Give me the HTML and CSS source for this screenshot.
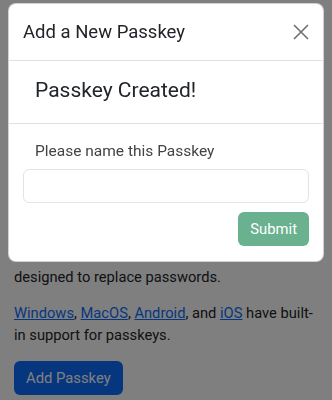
FILE: index.html
```html
<!DOCTYPE html>
<html lang="en">
<head>
    <meta charset="UTF-8">
    <meta name="viewport" content="width=device-width, initial-scale=1.0">
    <title>Passkeys</title>
    <link rel="stylesheet" href="styles.css">
</head>
<body>

    <!-- Page behind the modal -->
    <div class="page">
        <h1>Passkeys</h1>
        <p>This page lets you try out passkeys,<br>a new way to sign in to websites<br>and apps without a password.</p>
        <p>Nothing is sent anywhere; the keys<br>stay on this device.</p>
        <p>Passkeys are a new standard<br>which is an alternative method<br>designed to replace passwords.</p>
        <p><a href="#">Windows</a>, <a href="#">MacOS</a>, <a href="#">Android</a>, and <a href="#">iOS</a> have built-in support for passkeys.</p>
        <button class="btn-primary">Add Passkey</button>
    </div>

    <!-- Modal -->
    <div class="backdrop"></div>
    <div class="modal">
        <div class="modal-header">
            <h5 class="modal-title">Add a New Passkey</h5>
            <button class="btn-close" aria-label="Close">
                <svg width="16" height="16" viewBox="0 0 16 16">
                    <path d="M1 1 L15 15 M15 1 L1 15" stroke="#6f6f6f" stroke-width="1.6" fill="none"/>
                </svg>
            </button>
        </div>
        <div class="modal-status">
            <h4>Passkey Created!</h4>
        </div>
        <div class="modal-body">
            <label for="keyName">Please name this Passkey</label>
            <input id="keyName" type="text" class="input-field">
            <div class="actions">
                <button class="btn-success" disabled>Submit</button>
            </div>
        </div>
    </div>

</body>
</html>
```

FILE: styles.css
```css
body {
    font-family: Roboto, "Noto Sans", Arial, sans-serif;
    font-size: 14.7px;
    line-height: 22px;
    color: #212529;
    margin: 0;
    padding: 0;
    background-color: #fff;
    height: 100vh;
    overflow: hidden;
}

.page {
    padding: 0 14px;
}

h1 {
    font-size: 32px;
    font-weight: 500;
    line-height: 38px;
    margin: 34px 0 12px;
}

p {
    margin: 0 0 14px;
}

a {
    color: #0d6efd;
}

.btn-primary {
    font-family: inherit;
    font-size: 14.8px;
    line-height: 22px;
    padding: 6px 12px;
    margin-top: 1px;
    background-color: #0d6efd;
    color: #fff;
    border: none;
    border-radius: 6px;
}

/* Lop phu mo */
.backdrop {
    position: fixed;
    inset: 0;
    background-color: rgba(0, 0, 0, 0.5);
}

.modal {
    position: fixed;
    top: 3px;
    left: 8px;
    right: 8px;
    background-color: #fff;
    border: 1px solid rgba(0, 0, 0, 0.175);
    border-radius: 8px;
}

.modal-header {
    display: flex;
    align-items: center;
    justify-content: space-between;
    padding: 14px;
    border-bottom: 1px solid #dee2e6;
}

.modal-title {
    margin: 0;
    font-size: 18.5px;
    font-weight: 400;
    line-height: 28px;
}

.btn-close {
    background: none;
    border: none;
    padding: 0;
    width: 16px;
    height: 16px;
    display: flex;
}

.modal-status {
    padding: 14px 12px 18px;
    border-bottom: 1px solid #dee2e6;
}

.modal-status h4 {
    margin: 0 0 0 14px;
    font-size: 21px;
    font-weight: 400;
    line-height: 30px;
}

.modal-body {
    display: flex;
    flex-direction: column;
    padding: 16px 14px 15px;
}

.modal-body label {
    padding: 0 12px;
    color: #444;
    font-size: 15.5px;
    margin-bottom: 7px;
}

.input-field {
    box-sizing: border-box;
    height: 34px;
    padding: 6px 12px;
    font-family: inherit;
    font-size: 16px;
    border: 1px solid #e2e4e7;
    border-radius: 6px;
}

.actions {
    display: flex;
    justify-content: flex-end;
    margin-top: 9px;
}

.btn-success {
    font-family: inherit;
    font-size: 14.8px;
    line-height: 22px;
    padding: 6px 12px;
    background-color: #198754;
    color: #fff;
    border: none;
    border-radius: 6px;
    opacity: 0.65;
}
```
